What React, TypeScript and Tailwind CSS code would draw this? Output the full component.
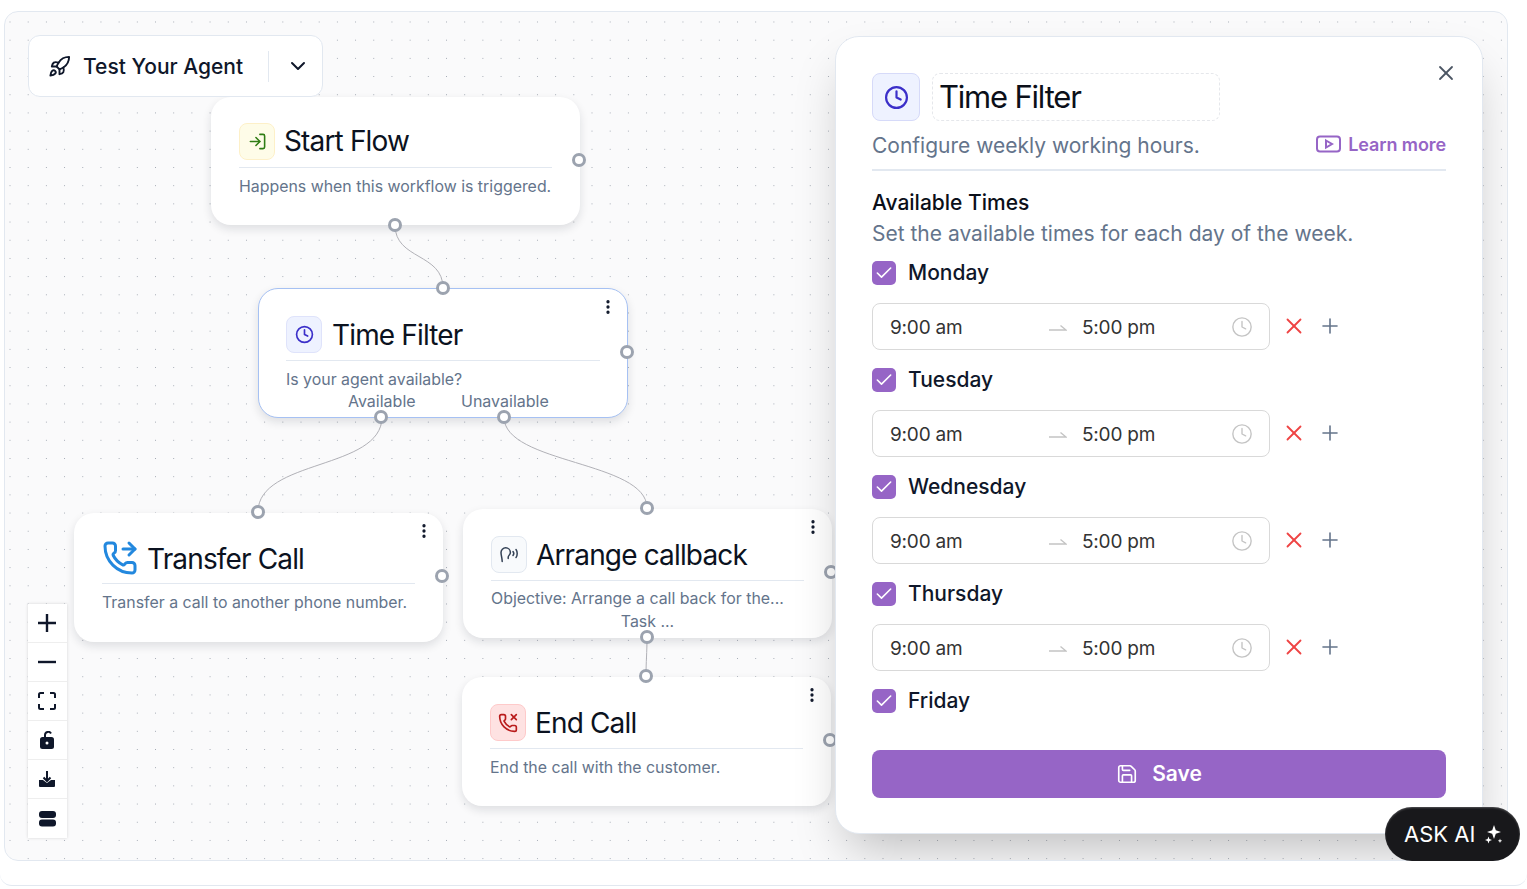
import React from "react";
import { Rocket, ChevronDown, LogIn, Clock, PhoneForwarded, PhoneMissed, EllipsisVertical, X, Plus, Save, Check } from "lucide-react";

function Handle({ className }: { className: string }) {
  return <div className={"absolute w-[14px] h-[14px] -ml-[1px] -mt-[1px] rounded-full bg-white border-[3px] border-[#9ca3af] z-20 " + className} />;
}

type NodeProps = { pos: string; border?: string; pad?: string; titleClass?: string; descClass?: string; icon: React.ReactNode; title: string; desc: string; menu?: boolean; children?: React.ReactNode };

function Node({ pos, border, pad, titleClass, descClass, icon, title, desc, menu, children }: NodeProps) {
  return (
    <div className={"absolute bg-white rounded-[20px] shadow-[0_4px_10px_rgba(15,23,42,0.12)] " + (pad ?? "pt-[26px] px-[28px]") + " " + pos + " " + (border ?? "")}>
      {menu && <EllipsisVertical className="absolute right-[10px] top-[9px] text-[#0f172a]" size={18} strokeWidth={2.4} />}
      <div className="flex items-center gap-[9px] h-[37px]">
        {icon}
        <span className={"text-[28px] leading-[37px] text-[#0b1220] tracking-[-0.85px] whitespace-nowrap " + (titleClass ?? "")}>{title}</span>
      </div>
      <div className="h-[1px] bg-[#e2e8f0] mt-[7px]" />
      <p className={"text-[15.9px] leading-[20px] text-[#64748b] whitespace-nowrap " + (descClass ?? "mt-[9px]")}>{desc}</p>
      {children}
    </div>
  );
}

function IconBox({ className, children }: { className: string; children: React.ReactNode }) {
  return <div className={"w-[36px] h-[37px] rounded-lg border flex items-center justify-center shrink-0 " + className}>{children}</div>;
}

function Day({ name }: { name: string }) {
  return (
    <div className="flex items-center gap-[12px] h-[24px]">
      <div className="w-[24px] h-[24px] rounded-[5px] bg-[#9665c6] flex items-center justify-center">
        <Check className="text-white" size={20} strokeWidth={1.9} />
      </div>
      <span className="text-[21px] leading-[24px] font-[450] text-[#0f172a]">{name}</span>
    </div>
  );
}

function TimeRow() {
  return (
    <div className="flex items-center mt-[18px] mb-[18px]">
      <div className="w-[398px] h-[47px] rounded-lg border border-[#d9d9d9] bg-white flex items-center pl-[17px] pr-[16px] text-[19px] tracking-[-0.2px] text-[#333333]">
        <span className="w-[159px] pt-[4px]">9:00 am</span>
        <svg width="18" height="8" viewBox="0 0 18 8" fill="none" stroke="#c4c4c4" strokeWidth="1.4" className="shrink-0">
          <path d="M0 7h17L11.5 2.5" />
        </svg>
        <span className="ml-[15px] flex-1 pt-[4px]">5:00 pm</span>
        <Clock size={22} strokeWidth={1.5} className="text-[#c4c4c4]" />
      </div>
      <X size={26} strokeWidth={1.7} className="text-[#ef4444] ml-[11px] mb-[2px]" />
      <Plus size={24} strokeWidth={1.6} className="text-[#64748b] ml-[11px] mb-[2px]" />
    </div>
  );
}

function Ctl({ children, last }: { children: React.ReactNode; last?: boolean }) {
  return <div className={"h-[39px] flex items-center justify-center bg-white pr-[1px] " + (last ? "" : "border-b border-[#eeeeee]")}>{children}</div>;
}

export default function App() {
  return (
    <div className="w-[1527px] h-[886px] bg-white border-b border-[#e2e8f0] rounded-[12px] overflow-hidden pt-[11px] pl-[4px] relative font-['Inter',sans-serif]">
      <div className="relative w-[1504px] h-[850px] rounded-[14px] border border-[#e2e8f0] overflow-hidden bg-[#fafafb] bg-[radial-gradient(circle,#a3a9b3_0.7px,transparent_0.9px)] bg-size-[18.2px_18.2px] bg-position-[-4.1px_0.9px]">
        <svg className="absolute left-0 top-0 z-0" width="1504" height="850" fill="none" stroke="#b1b1b7" strokeWidth="1">
          <path d="M390 213C390 248 438 241 438 276" />
          <path d="M377 405C377 458 253 447 253 500" />
          <path d="M499 405C499 452 642 449 642 496" />
          <path d="M642 625C642 642 641 648 641 665" />
        </svg>

        <div className="absolute left-[23px] top-[23px] w-[295px] h-[62px] bg-white rounded-xl border border-[#e2e8f0] flex items-center pl-[19px] z-10">
          <Rocket size={23} strokeWidth={2} className="text-[#0f172a]" />
          <span className="ml-[12px] pt-[1px] text-[21px] font-medium text-[#0f172a] whitespace-nowrap">Test Your Agent</span>
          <div className="ml-[25px] w-[1px] h-[31px] bg-[#e2e8f0]" />
          <ChevronDown size={24} strokeWidth={2} className="ml-[17px] text-[#0f172a]" />
        </div>

        <Node pos="left-[206px] top-[85px] w-[369px] h-[128px]" title="Start Flow" desc="Happens when this workflow is triggered."
          icon={<IconBox className="bg-[#fefce8] border-[#fdf0c8]"><LogIn size={19} strokeWidth={2} className="text-[#2f7d14]" /></IconBox>}>
          <Handle className="left-[362px] top-[57px]" />
          <Handle className="left-[178px] top-[122px]" />
        </Node>

        <Node pos="left-[253px] top-[276px] w-[370px] h-[130px]" pad="pt-[27px] px-[27px]" titleClass="pt-[2px] pl-[1px]" border="border border-[#a6c1f3]" menu title="Time Filter" desc="Is your agent available?"
          icon={<IconBox className="bg-[#eef2ff] border-[#dfe3fb]"><Clock size={19} strokeWidth={2.1} className="text-[#3b2fc9]" /></IconBox>}>
          <span className="absolute left-[89px] top-[102px] text-[16px] leading-[20px] text-[#64748b]">Available</span>
          <span className="absolute left-[202px] top-[102px] text-[16px] leading-[20px] text-[#64748b]">Unavailable</span>
          <Handle className="left-[178px] top-[-7px]" />
          <Handle className="left-[362px] top-[57px]" />
          <Handle className="left-[116px] top-[122px]" />
          <Handle className="left-[239px] top-[122px]" />
        </Node>

        <Node pos="left-[69px] top-[501px] w-[369px] h-[129px]" titleClass="pt-[4px]" menu title="Transfer Call" desc="Transfer a call to another phone number."
          icon={<PhoneForwarded size={36} strokeWidth={2} className="text-[#2388de] shrink-0" />}>
          <Handle className="left-[178px] top-[-7px]" />
          <Handle className="left-[362px] top-[57px]" />
        </Node>

        <Node pos="left-[458px] top-[497px] w-[369px] h-[129px]" pad="pt-[27px] px-[28px]" titleClass="pt-[2px]" descClass="mt-[8px]" menu title="Arrange callback" desc="Objective: Arrange a call back for the..."
          icon={<IconBox className="bg-[#f8fafc] border-[#e2e8f0]">
            <svg width="19" height="17" viewBox="0 0 19 17" fill="none" stroke="#334155" strokeWidth="1.5" strokeLinecap="round">
              <path d="M2.200 15.500C2.200 12 1 9.500 1 6.500a4.700 4.700 0 0 1 9.400 0c0 2.200-2 2.800-2.200 4.500v1.500" />
              <path d="M13 5.500c.8 1 .8 3 0 4M16 3.500c1.600 2 1.600 6 0 8" />
            </svg>
          </IconBox>}>
          <p className="text-center text-[15.9px] leading-[20px] text-[#64748b] mt-[3px]">Task ...</p>
          <Handle className="left-[178px] top-[-7px]" />
          <Handle className="left-[362px] top-[57px]" />
          <Handle className="left-[178px] top-[122px]" />
        </Node>

        <Node pos="left-[457px] top-[665px] w-[369px] h-[129px]" pad="pt-[27px] px-[28px]" titleClass="pt-[2px]" menu title="End Call" desc="End the call with the customer."
          icon={<IconBox className="bg-[#fee2e2] border-[#fecaca]"><PhoneMissed size={20} strokeWidth={2} className="text-[#b91c1c]" /></IconBox>}>
          <Handle className="left-[178px] top-[-7px]" />
          <Handle className="left-[362px] top-[57px]" />
        </Node>

        <div className="absolute left-[23px] top-[592px] w-[39px] shadow-[0_0_3px_rgba(0,0,0,0.15)] z-10">
          <Ctl><svg width="18" height="18" viewBox="0 0 18 18" stroke="#0f172a" strokeWidth="2.4"><path d="M9 0v18M0 9h18" /></svg></Ctl>
          <Ctl><svg width="18" height="18" viewBox="0 0 18 18" stroke="#0f172a" strokeWidth="2.4"><path d="M0 9h18" /></svg></Ctl>
          <Ctl><svg width="18" height="18" viewBox="0 0 18 18" fill="none" stroke="#0f172a" strokeWidth="2"><path d="M1 6V2.500A1.500 1.500 0 0 1 2.500 1H6M12 1h3.500A1.500 1.500 0 0 1 17 2.500V6M17 12v3.500a1.500 1.500 0 0 1-1.500 1.500H12M6 17H2.500A1.500 1.500 0 0 1 1 15.500V12" /></svg></Ctl>
          <Ctl><svg width="16" height="18" viewBox="0 0 16 18"><rect x="1" y="6" width="14" height="12" rx="2.500" fill="#0f172a" /><path d="M6 6V4a3.200 3.200 0 0 1 6 -1.500" fill="none" stroke="#0f172a" strokeWidth="2" /><circle cx="8" cy="12" r="1.500" fill="#fff" /></svg></Ctl>
          <Ctl><svg width="16" height="16" viewBox="0 0 16 16"><path d="M0 9h4l4 3 4-3h4v6a1 1 0 0 1-1 1H1a1 1 0 0 1-1-1z" fill="#0f172a" /><path d="M8 0v9M4.500 6.500 8 10l3.500-3.500" fill="none" stroke="#0f172a" strokeWidth="2" /></svg></Ctl>
          <Ctl last><svg width="17" height="16" viewBox="0 0 17 16" fill="#0f172a"><rect width="17" height="7" rx="3" /><rect y="8.500" width="17" height="7" rx="3" /></svg></Ctl>
        </div>

        <div className="absolute left-[830px] top-[24px] w-[648px] h-[798px] bg-white rounded-[24px] border border-[#e2e8f0] shadow-2xl pt-[36px] pl-[36px] pr-[36px] z-30">
          <X size={24} strokeWidth={1.8} className="absolute right-[24px] top-[24px] text-[#4b5563]" />
          <div className="flex gap-[12px]">
            <div className="w-[48px] h-[48px] rounded-lg bg-[#eef2ff] border border-[#d6daf9] flex items-center justify-center">
              <Clock size={25} strokeWidth={2.1} className="text-[#3b2fc9]" />
            </div>
            <div className="w-[288px] h-[48px] rounded-lg border border-dashed border-[#e5e7eb] pl-[6px] flex items-center text-[31px] text-[#0b0f19] tracking-[-1.2px]">Time Filter</div>
          </div>
          <div className="flex items-center justify-between mt-[9px] h-[30px]">
            <span className="text-[21px] text-[#64748b] pt-[2px]">Configure weekly working hours.</span>
            <span className="flex items-center gap-[7px] text-[18px] font-semibold tracking-[-0.1px] text-[#9665c6] pb-[2px]">
              <svg width="25" height="18" viewBox="0 0 25 18" fill="none" stroke="#9665c6" strokeWidth="2"><rect x="1" y="1.500" width="23" height="15" rx="3" /><path d="M10 5.500 16 9l-6 3.500z" /></svg>
              Learn more
            </span>
          </div>
          <div className="h-[2px] bg-[#e2e8f0] mt-[9px]" />
          <div className="text-[21px] leading-[26px] font-[450] text-[#0b0f19] mt-[19px]">Available Times</div>
          <div className="text-[21px] leading-[28px] text-[#64748b] mt-[4px] mb-[13px]">Set the available times for each day of the week.</div>
          <Day name="Monday" /><TimeRow />
          <Day name="Tuesday" /><TimeRow />
          <Day name="Wednesday" /><TimeRow />
          <Day name="Thursday" /><TimeRow />
          <Day name="Friday" />
          <div className="h-[48px] mt-[37px] rounded-lg bg-[#9665c6] flex items-center justify-center gap-[14px] text-white text-[21px] font-semibold">
            <Save size={22} strokeWidth={1.8} />Save
          </div>
        </div>
      </div>

      <div className="absolute left-[1385px] top-[807px] w-[135px] h-[54px] rounded-full bg-[#18181b] flex items-center pl-[19px] gap-[10px] text-white text-[22px] z-40 shadow-[inset_0_1px_2px_rgba(255,255,255,0.25)]">
        ASK AI
        <svg width="18" height="20" viewBox="0 0 18 20" fill="#fff"><path d="M9 1l1.800 5.200L16 8l-5.200 1.800L9 15 7.200 9.800 2 8l5.200-1.800z" /><path d="M3.500 12.500l.9 2.600 2.600.9-2.600.9-.9 2.600-.9-2.600L0 16l2.600-.9zM15 14.500l.6 1.700 1.700.6-1.700.6-.6 1.700-.6-1.700-1.700-.6 1.700-.6z" /></svg>
      </div>
    </div>
  );
}
